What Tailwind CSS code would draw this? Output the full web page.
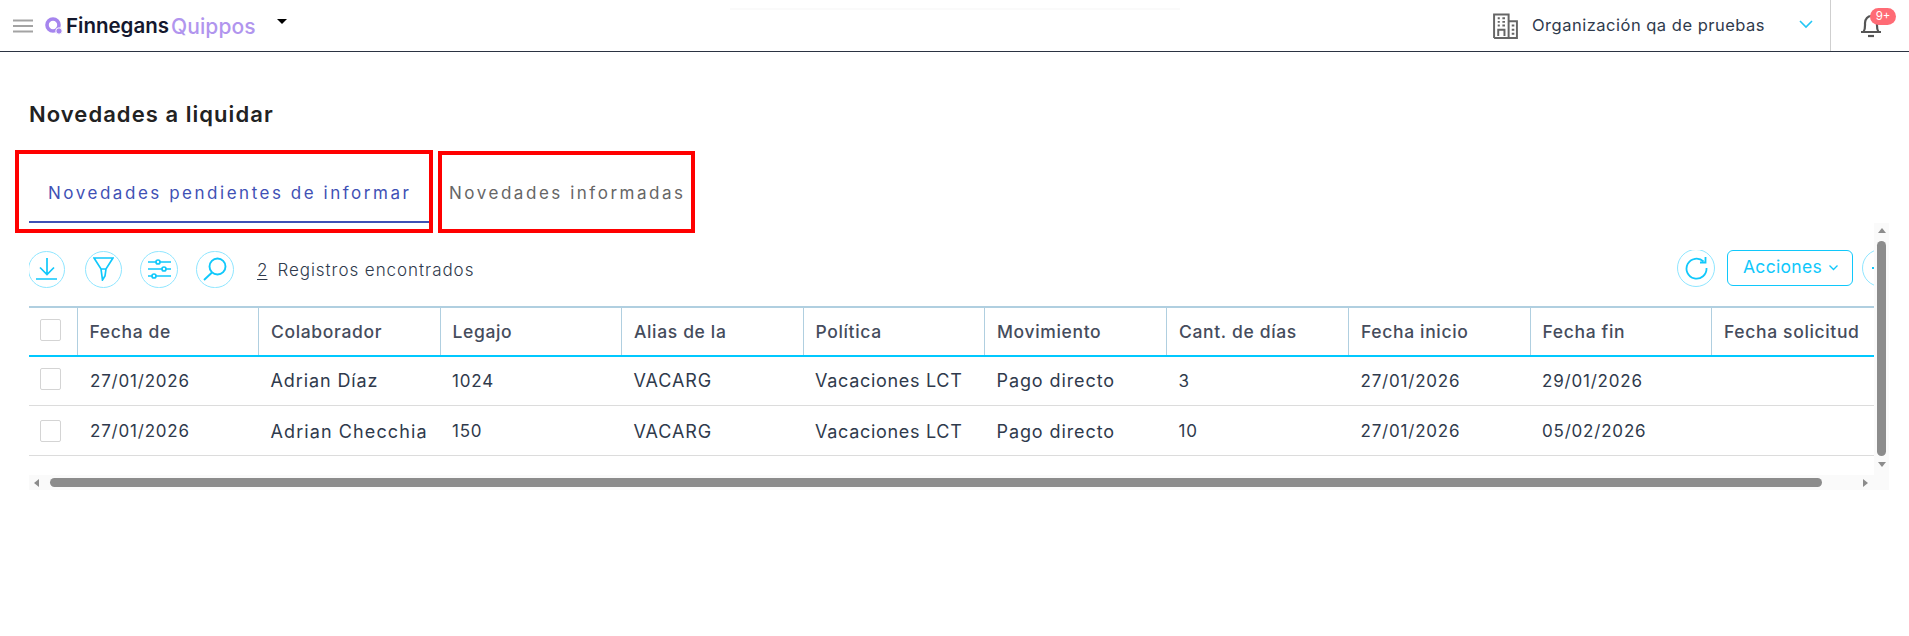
<!doctype html>
<html>
<head>
<meta charset="utf-8">
<script src="https://cdn.jsdelivr.net/npm/@tailwindcss/browser@4"></script>
</head>
<body class="bg-white font-['Inter','Liberation_Sans',sans-serif] h-[636px] overflow-hidden">
<header class="h-[52px] border-b border-[#2b3342] flex items-center relative">
  <div class="absolute left-[730px] top-[8px] w-[450px] h-[2px] bg-[#fafafa]"></div>
  <svg class="ml-[13px] w-[20px] h-[14px]" viewBox="0 0 20 14"><path d="M0 1.5h20M0 7h20M0 12.5h20" stroke="#a3a3a3" stroke-width="2"/></svg>
  <svg class="ml-[12px] w-[18px] h-[18px] mt-[1px]" viewBox="0 0 18 18"><circle cx="8" cy="8" r="6" fill="none" stroke="#a685ee" stroke-width="3.6"/><circle cx="14" cy="14" r="3.2" fill="#a685ee" stroke="#fff" stroke-width="1"/></svg>
  <span class="ml-[3px] text-[20.500px] leading-none font-semibold text-[#14182e] tracking-[0px] w-[105px] mt-[2px] whitespace-nowrap">Finnegans</span>
  <span class="text-[21px] leading-none font-medium text-[#b195ee] tracking-[0.1px] mt-[2px] w-[92px]">Quippos</span>
  <span class="ml-[14px] -mt-[9px] w-0 h-0 border-l-[5px] border-r-[5px] border-t-[5px] border-l-transparent border-r-transparent border-t-black"></span>
  <div class="ml-auto flex items-center h-full">
    <svg class="w-[27px] h-[27px] -mt-[1px]" viewBox="0 0 26 26" fill="none" stroke="#666" stroke-width="1.9"><path d="M2 25V2.500h14V25M16 9h8v16H2"/><path d="M6 23v-6h6v6M5.500 6h2M10 6h2.500M5.500 9.500h2M10 9.500h2.500M5.500 13h2M10 13h2.500M19 13h2.500M19 17h2.500M19 21h2.500"/></svg>
    <span class="ml-[13px] w-[267px] text-[16.500px] text-[#2f3a4c] tracking-[0.5px]">Organización qa de pruebas</span>
    <svg class="w-[14px] h-[9px] -mt-[2px]" viewBox="0 0 14 9" fill="none" stroke="#22c6f5" stroke-width="1.6"><path d="M1 1l6 6 6-6"/></svg>
    <div class="ml-[17px] w-px h-full bg-[#cfcfcf]"></div>
    <div class="relative ml-[29px] w-[24px] h-[28px]">
      <svg class="absolute left-0 top-0 w-[22px] h-[26px]" viewBox="0 0 22 26" fill="none" stroke="#555" stroke-width="2.200"><path d="M1 20h20M3.500 20c2-3 1.500-5 1.500-9 0-4 3-7 6-7s6 3 6 7c0 4-.5 6 1.500 9"/><path d="M8 24h6"/></svg>
      <span class="absolute left-[10px] top-[-4px] w-[26px] h-[17px] rounded-full bg-[#ff6b75] text-white text-[11.500px] leading-[17px] text-center">9+</span>
    </div>
    <div class="w-[25px]"></div>
  </div>
</header>

<main class="relative">
  <h1 class="pl-[29px] pt-[49px] text-[22px] leading-[26px] font-semibold text-[#222] tracking-[1.05px]">Novedades a liquidar</h1>

  <div class="absolute left-[15px] top-[98px] w-[418px] h-[83px] border-[4px] border-[#ff0000] z-10"></div>
  <div class="absolute left-[438px] top-[99px] w-[257px] h-[82px] border-[4px] border-[#ff0000] z-10"></div>

  <div class="ml-[29px] mt-[25px] flex h-[71px]">
    <div class="w-[402px] h-full border-b-2 border-[#3f51b5] pl-[19px] pt-[29px] text-[17px] leading-[24px] text-[#3f51b5] tracking-[2.53px] whitespace-nowrap">Novedades pendientes de informar</div>
    <div class="pl-[18px] pt-[29px] text-[17px] leading-[24px] text-[#666] tracking-[2.53px] whitespace-nowrap">Novedades informadas</div>
  </div>

  <div class="ml-[29px] w-[1860px]">
    <div class="flex h-[252px]">
      <div class="w-[1845px] overflow-hidden pt-[27px]">
        <div class="flex items-center h-[38px] relative overflow-hidden">
          <span class="w-[37px] h-[37px] -ml-[1px] rounded-full border border-[#8fe6ff] flex items-center justify-center">
            <svg class="w-[22px] h-[24px]" viewBox="0 0 22 24" fill="none" stroke="#10c8fb" stroke-width="1.700"><path d="M11 1v16M4 10.500l7 7 7-7M0 22h21"/></svg>
          </span>
          <span class="ml-[20px] w-[37px] h-[37px] rounded-full border border-[#8fe6ff] flex items-center justify-center">
            <svg class="w-[21px] h-[24px]" viewBox="0 0 21 24" fill="none" stroke="#10c8fb" stroke-width="1.700"><path d="M1 1h19l-7 11h-5zM8 12l1.500 11 2.500-4 1-7"/></svg>
          </span>
          <span class="ml-[18px] w-[38px] h-[37px] rounded-full border border-[#8fe6ff] flex items-center justify-center">
            <svg class="w-[24px] h-[20px]" viewBox="0 0 24 20" fill="none" stroke="#10c8fb" stroke-width="1.700"><path d="M1 3h23M1 10h23M1 17h23"/><circle cx="11" cy="3" r="2" fill="#fff"/><circle cx="17" cy="10" r="2" fill="#fff"/><circle cx="7" cy="17" r="2" fill="#fff"/></svg>
          </span>
          <span class="ml-[18px] w-[38px] h-[37px] rounded-full border border-[#8fe6ff] flex items-center justify-center">
            <svg class="w-[24px] h-[24px]" viewBox="0 0 24 24" fill="none" stroke="#10c8fb" stroke-width="1.900"><circle cx="14.500" cy="9.500" r="8"/><path d="M9 15.500l-8 7.500"/></svg>
          </span>
          <span class="ml-[23px] mt-[3px] text-[17px] text-[#2f3a4c] underline underline-offset-[3px] font-light">2</span>
          <span class="ml-[10px] mt-[3px] text-[17px] text-[#2f3a4c] tracking-[0.95px] font-light">Registros encontrados</span>
          <span class="ml-auto -mt-[2px] w-[38px] h-[38px] rounded-full border border-[#8fe6ff] flex items-center justify-center">
            <svg class="w-[24px] h-[24px]" viewBox="0 0 24 24" fill="none" stroke="#10c8fb" stroke-width="1.800"><path d="M19.500 5.500A10 10 0 1 0 22.500 12"/><path d="M21.500 1v5.500H16"/></svg>
          </span>
          <span class="ml-[12px] -mt-[3px] w-[126px] h-[36px] rounded-[6px] border border-[#10c8fb] text-[#10c8fb] text-[17.500px] font-normal flex items-center pl-[15px] tracking-[0.3px]">Acciones
            <svg class="ml-[7px] w-[9px] h-[6px]" viewBox="0 0 9 6" fill="none" stroke="#10c8fb" stroke-width="1.300"><path d="M.5.500l4 4 4-4"/></svg>
          </span>
          <span class="ml-[9px] -mt-[2px] w-[38px] h-[38px] shrink-0 rounded-full border border-[#8fe6ff] -mr-[26px] flex items-center justify-start pl-[9px]"><span class="w-[5px] h-[2px] bg-[#10c8fb]"></span></span>
        </div>

        <div class="mt-[18px] w-[1845px] overflow-hidden border-t-2 border-[#b0cfe0]">
          <table class="w-[1863px] table-fixed border-collapse text-left">
            <colgroup><col class="w-[48px]"><col class="w-[181.500px]"><col class="w-[181.500px]"><col class="w-[181.500px]"><col class="w-[181.500px]"><col class="w-[181.500px]"><col class="w-[182px]"><col class="w-[182px]"><col class="w-[181.500px]"><col class="w-[181.500px]"></colgroup>
            <thead>
              <tr class="h-[48px] border-b-2 border-[#00c8ff] text-[17.500px] text-[#454c5c] whitespace-nowrap">
                <th class="pl-[11px] border-r border-[#b0cfe0] font-semibold"><span class="block w-[21px] h-[22px] mb-[4px] rounded-[2px] border border-[#d4d4d4]"></span></th>
                <th class="pl-[12px] pt-[1px] border-r border-[#b0cfe0] font-medium tracking-[0.65px]">Fecha de</th>
                <th class="pl-[12px] pt-[1px] border-r border-[#b0cfe0] font-medium tracking-[0.65px]">Colaborador</th>
                <th class="pl-[12px] pt-[1px] border-r border-[#b0cfe0] font-medium tracking-[0.65px]">Legajo</th>
                <th class="pl-[12px] pt-[1px] border-r border-[#b0cfe0] font-medium tracking-[0.65px]">Alias de la</th>
                <th class="pl-[12px] pt-[1px] border-r border-[#b0cfe0] font-medium tracking-[0.65px]">Política</th>
                <th class="pl-[12px] pt-[1px] border-r border-[#b0cfe0] font-medium tracking-[0.65px]">Movimiento</th>
                <th class="pl-[12px] pt-[1px] border-r border-[#b0cfe0] font-medium tracking-[0.65px]">Cant. de días</th>
                <th class="pl-[12px] pt-[1px] border-r border-[#b0cfe0] font-medium tracking-[0.65px]">Fecha inicio</th>
                <th class="pl-[12px] pt-[1px] border-r border-[#b0cfe0] font-medium tracking-[0.65px]">Fecha fin</th>
                <th class="pl-[12px] pt-[1px] font-medium tracking-[0.65px]">Fecha solicitud</th>
              </tr>
            </thead>
            <tbody class="text-[17px] text-[#2f3a4c] tracking-[0.8px] whitespace-nowrap">
              <tr class="h-[49px] border-b border-[#dcdcdc]">
                <td class="pl-[11px]"><span class="block w-[21px] h-[22px] mb-[4px] rounded-[2px] border border-[#d4d4d4]"></span></td>
                <td class="pl-[13px] pt-[1px]">27/01/2026</td><td class="pl-[12px] text-[18px] tracking-[0.9px]">Adrian Díaz</td><td class="pl-[12px] pt-[1px]">1024</td><td class="pl-[12px] text-[18px] tracking-[0.9px]">VACARG</td><td class="pl-[12px] text-[18px] tracking-[0.7px]">Vacaciones LCT</td><td class="pl-[12px] text-[18px] tracking-[0.9px]">Pago directo</td><td class="pl-[12px] pt-[1px]">3</td><td class="pl-[12px] pt-[1px]">27/01/2026</td><td class="pl-[12px] pt-[1px]">29/01/2026</td><td></td>
              </tr>
              <tr class="h-[50px] border-b border-[#dcdcdc]">
                <td class="pl-[11px]"><span class="block w-[21px] h-[22px] mt-[2px] rounded-[2px] border border-[#d4d4d4]"></span></td>
                <td class="pl-[13px] pt-[4px]">27/01/2026</td><td class="pl-[12px] pt-[2px] text-[18px] tracking-[1.1px]">Adrian Checchia</td><td class="pl-[12px] pt-[4px]">150</td><td class="pl-[12px] pt-[2px] text-[18px] tracking-[0.9px]">VACARG</td><td class="pl-[12px] pt-[2px] text-[18px] tracking-[0.7px]">Vacaciones LCT</td><td class="pl-[12px] pt-[2px] text-[18px] tracking-[0.9px]">Pago directo</td><td class="pl-[12px] pt-[4px]">10</td><td class="pl-[12px] pt-[4px]">27/01/2026</td><td class="pl-[12px] pt-[4px]">05/02/2026</td><td></td>
              </tr>
            </tbody>
          </table>
        </div>
      </div>
      <div class="w-[15px] bg-[#fafafa] flex flex-col items-center">
        <span class="mt-[5px] w-0 h-0 border-l-[4px] border-r-[4px] border-b-[5px] border-l-transparent border-r-transparent border-b-[#8c8c8c]"></span>
        <span class="mt-[8px] w-[9px] h-[215px] rounded-full bg-[#8c8c8c]"></span>
        <span class="mt-[6px] w-0 h-0 border-l-[4px] border-r-[4px] border-t-[5px] border-l-transparent border-r-transparent border-t-[#8c8c8c]"></span>
      </div>
    </div>
    <div class="h-[15px] bg-[#fafafa] flex items-center">
      <span class="ml-[5px] w-0 h-0 border-t-[4px] border-b-[4px] border-r-[5px] border-t-transparent border-b-transparent border-r-[#8c8c8c]"></span>
      <span class="ml-[11px] w-[1772px] h-[9px] rounded-full bg-[#8c8c8c]"></span>
      <span class="ml-[41px] w-0 h-0 border-t-[4px] border-b-[4px] border-l-[5px] border-t-transparent border-b-transparent border-l-[#8c8c8c]"></span>
    </div>
  </div>
</main>
</body>
</html>
